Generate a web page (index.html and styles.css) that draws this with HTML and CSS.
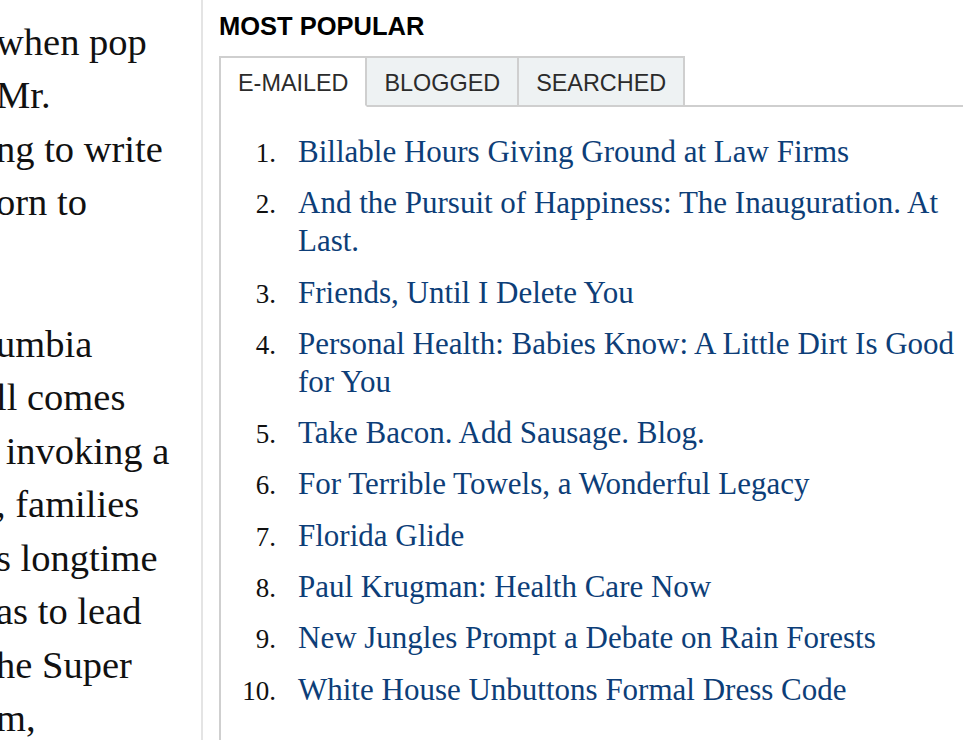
FILE: index.html
```html
<!DOCTYPE html>
<html lang="en">
<head>
<meta charset="utf-8">
<title>Most Popular</title>
<link rel="stylesheet" href="styles.css">
</head>
<body>
<div class="page">
  <div class="article">
    <div class="article-inner">
      <p class="para">
        <span class="ln ln-cut">th by the tale</span>
        <span class="ln">when pop</span>
        <span class="ln">Mr.</span>
        <span class="ln">ng to write</span>
        <span class="ln">orn to</span>
      </p>
      <p class="para">
        <span class="ln">umbia</span>
        <span class="ln">ll comes</span>
        <span class="ln"> invoking a</span>
        <span class="ln">, families</span>
        <span class="ln">s longtime</span>
        <span class="ln">as to lead</span>
        <span class="ln">he Super</span>
        <span class="ln">m,</span>
      </p>
    </div>
  </div>
  <aside class="popular">
    <h2 class="pop-title">MOST POPULAR</h2>
    <div class="panel">
      <div class="tabs">
        <div class="tab active">E-MAILED</div>
        <div class="tab">BLOGGED</div>
        <div class="tab">SEARCHED</div>
        <div class="tab-fill"></div>
      </div>
      <ol class="pop-list">
        <li class="pop-item"><span class="num">1.</span><a class="pop-link" href="#">Billable Hours Giving Ground at Law Firms</a></li>
        <li class="pop-item"><span class="num">2.</span><a class="pop-link" href="#">And the Pursuit of Happiness: The Inauguration. At Last.</a></li>
        <li class="pop-item"><span class="num">3.</span><a class="pop-link" href="#">Friends, Until I Delete You</a></li>
        <li class="pop-item"><span class="num">4.</span><a class="pop-link" href="#">Personal Health: Babies Know: A Little Dirt Is Good for You</a></li>
        <li class="pop-item"><span class="num">5.</span><a class="pop-link" href="#">Take Bacon. Add Sausage. Blog.</a></li>
        <li class="pop-item"><span class="num">6.</span><a class="pop-link" href="#">For Terrible Towels, a Wonderful Legacy</a></li>
        <li class="pop-item"><span class="num">7.</span><a class="pop-link" href="#">Florida Glide</a></li>
        <li class="pop-item"><span class="num">8.</span><a class="pop-link" href="#">Paul Krugman: Health Care Now</a></li>
        <li class="pop-item"><span class="num">9.</span><a class="pop-link" href="#">New Jungles Prompt a Debate on Rain Forests</a></li>
        <li class="pop-item"><span class="num">10.</span><a class="pop-link" href="#">White House Unbuttons Formal Dress Code</a></li>
      </ol>
    </div>
  </aside>
</div>
</body>
</html>
```

FILE: styles.css
```css
html, body {
  margin: 0;
  padding: 0;
  background: #ffffff;
  overflow: hidden;
}

.page {
  display: flex;
  height: 740px;
  overflow: hidden;
}

/* cropped article column on the left */
.article {
  flex: none;
  width: 201px;
  border-right: 2px solid #e4e4e4;
  overflow: hidden;
}

.article-inner {
  margin-left: -4px;
  margin-top: -47px;
  font-family: "Liberation Serif", "Times New Roman", serif;
  font-size: 38.5px;
  line-height: 53.5px;
  color: #111111;
}

.para {
  margin: 0 0 88px;
}

.ln {
  display: block;
  white-space: pre;
}

.ln-cut {
  margin-bottom: 9px;
}

/* most popular module */
.popular {
  flex: 1;
  display: flex;
  flex-direction: column;
  padding: 11px 0 0 16px;
  font-family: "Liberation Sans", Arial, sans-serif;
  min-width: 0;
}

.pop-title {
  margin: 0 0 15px;
  font-size: 25.5px;
  line-height: 30px;
  font-weight: bold;
  color: #000000;
}

.panel {
  flex: 1;
  border-left: 2px solid #cfcfcf;
}

.tabs {
  display: flex;
}

.tab {
  padding: 4px 17px 0;
  line-height: 43px;
  font-size: 23.4px;
  color: #2b2b2b;
  background: #eef2f3;
  border-top: 2px solid #cfcfcf;
  border-right: 2px solid #cfcfcf;
  border-bottom: 2px solid #cfcfcf;
}

.tab.active {
  background: #ffffff;
  border-bottom-color: #ffffff;
}

.tab-fill {
  flex: 1;
  border-bottom: 2px solid #cfcfcf;
}

.pop-list {
  list-style: none;
  margin: 0;
  padding: 26px 0 0;
}

.pop-item {
  display: grid;
  grid-template-columns: 55px 1fr;
  column-gap: 22px;
  align-items: baseline;
  margin-bottom: 13.3px;
  font-family: "Liberation Serif", "Times New Roman", serif;
  line-height: 38px;
}

.num {
  text-align: right;
  font-size: 27px;
  line-height: 34px;
  color: #111111;
}

.pop-link {
  font-size: 31px;
  color: #0d3e78;
  text-decoration: none;
}
```
